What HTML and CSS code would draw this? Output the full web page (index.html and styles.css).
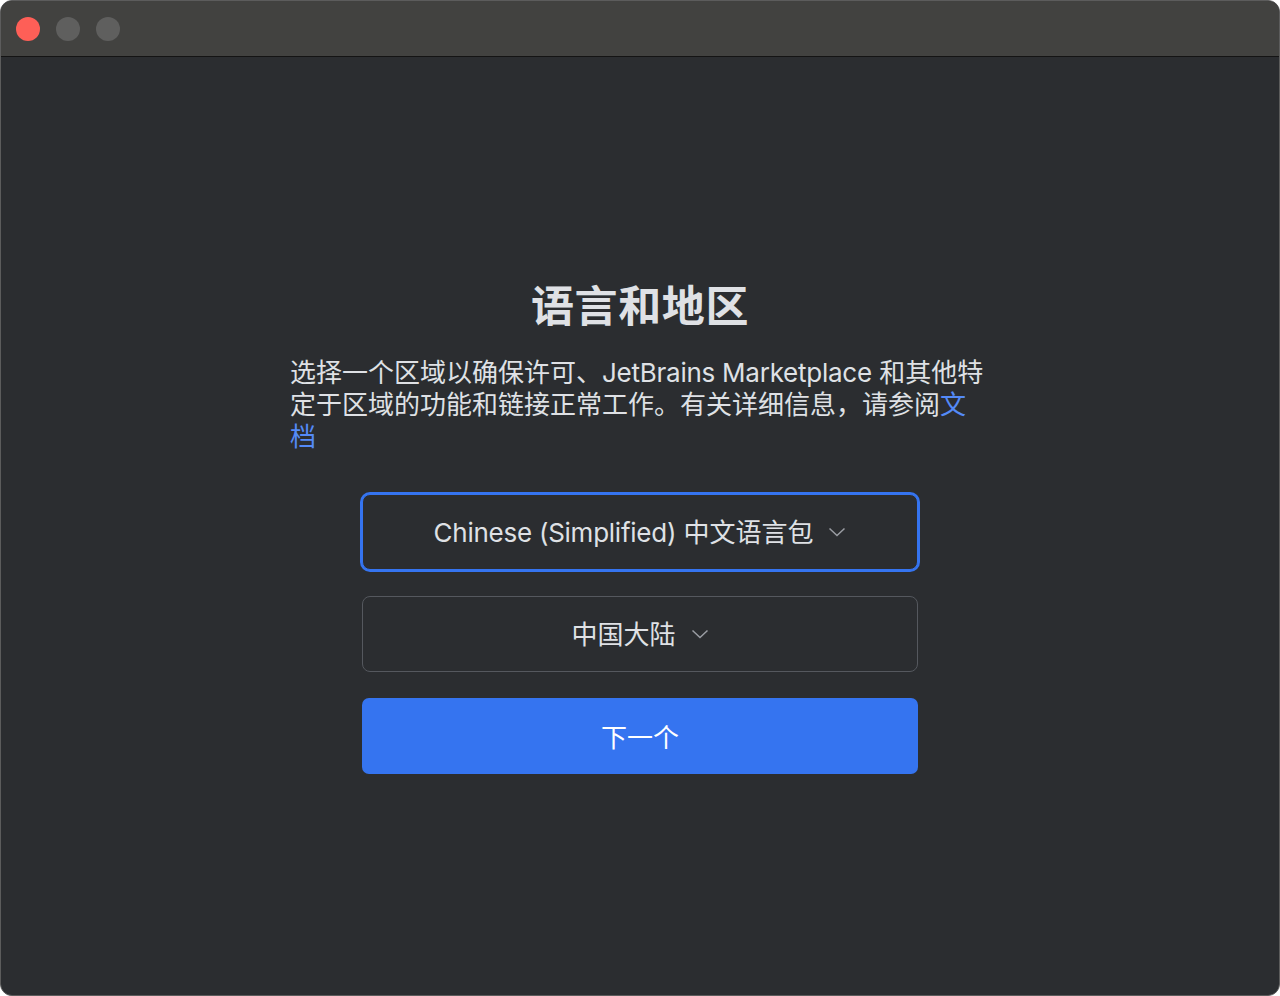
FILE: index.html
```html
<!DOCTYPE html>
<html lang="zh-CN">
<head>
<meta charset="utf-8">
<title>语言和地区</title>
<link rel="stylesheet" href="styles.css">
</head>
<body>
<div class="window">
  <div class="titlebar">
    <span class="light light-close"></span>
    <span class="light light-off"></span>
    <span class="light light-off"></span>
  </div>
  <div class="content">
    <div class="column">
      <h1 class="title">语言和地区</h1>
      <p class="desc">选择一个区域以确保许可、<span class="latin">JetBrains Marketplace</span> 和其他特定于区域的功能和链接正常工作。有关详细信息，请参阅<a class="link" href="#">文档</a></p>
      <div class="controls">
        <button class="select select-focused" type="button">
          <span class="label"><span class="latin">Chinese (Simplified)</span> 中文语言包</span>
          <svg class="chev" width="18" height="10" viewBox="0 0 18 10"><polyline points="1.5,1.5 9,8.5 16.5,1.5" fill="none" stroke="#9a9da3" stroke-width="1.5"/></svg>
        </button>
        <button class="select" type="button">
          <span class="label">中国大陆</span>
          <svg class="chev" width="18" height="10" viewBox="0 0 18 10"><polyline points="1.5,1.5 9,8.5 16.5,1.5" fill="none" stroke="#9a9da3" stroke-width="1.5"/></svg>
        </button>
        <button class="primary" type="button">下一个</button>
      </div>
    </div>
  </div>
</div>
</body>
</html>
```
FILE: styles.css
```css
* { box-sizing: border-box; }
html, body { margin: 0; height: 100%; }
body {
  background: #ffffff;
  font-family: Inter, "Noto Sans CJK SC", sans-serif;
}
.window {
  height: 996px;
  width: 1280px;
  border-radius: 12px;
  overflow: hidden;
  border: 1px solid #5c5c5c;
  display: flex;
  flex-direction: column;
  background: #2b2d30;
}
.titlebar {
  height: 56px;
  flex: none;
  background: #424240;
  border-bottom: 1px solid #141414;
  display: flex;
  align-items: center;
  gap: 16px;
  padding-left: 15px;
  padding-top: 1px;
}
.light {
  width: 24px;
  height: 24px;
  border-radius: 50%;
  display: block;
}
.light-close { background: #fe5f57; }
.light-off { background: #5f5f5e; }
.content {
  flex: 1;
  display: flex;
  justify-content: center;
  align-items: flex-start;
  padding-top: 223px;
}
.column {
  width: 700px;
  display: flex;
  flex-direction: column;
  align-items: center;
}
.title {
  margin: 0;
  font-size: 43px;
  letter-spacing: 0.6px;
  line-height: 52px;
  font-weight: 700;
  color: #dfe1e5;
  text-align: center;
}
.desc {
  margin: 25px 0 0;
  width: 700px;
  font-size: 26px;
  line-height: 32px;
  color: #dfe1e5;
  text-align: left;
}
.latin { letter-spacing: -0.25px; }
.link { color: #548af7; text-decoration: none; }
.controls {
  margin-top: 41px;
  width: 556px;
  display: flex;
  flex-direction: column;
  gap: 26px;
}
.select {
  height: 76px;
  width: 100%;
  background: #2b2d30;
  border: 1px solid #55585e;
  border-radius: 8px;
  display: flex;
  align-items: center;
  justify-content: center;
  font-family: Inter, "Noto Sans CJK SC", sans-serif;
  font-size: 26px;
  color: #dfe1e5;
  padding: 0 0 3px 0;
}
.label { white-space: nowrap; }
.select-focused {
  border: 1px solid #3574f0;
  box-shadow: 0 0 0 2px #3574f0;
}
.chev { display: block; flex: none; margin: 3px 0 0 15px; }
.primary {
  height: 76px;
  width: 100%;
  background: #3574f0;
  border: none;
  border-radius: 7px;
  color: #ffffff;
  font-family: Inter, "Noto Sans CJK SC", sans-serif;
  font-size: 26px;
  padding: 0 0 2px 0;
}
```
